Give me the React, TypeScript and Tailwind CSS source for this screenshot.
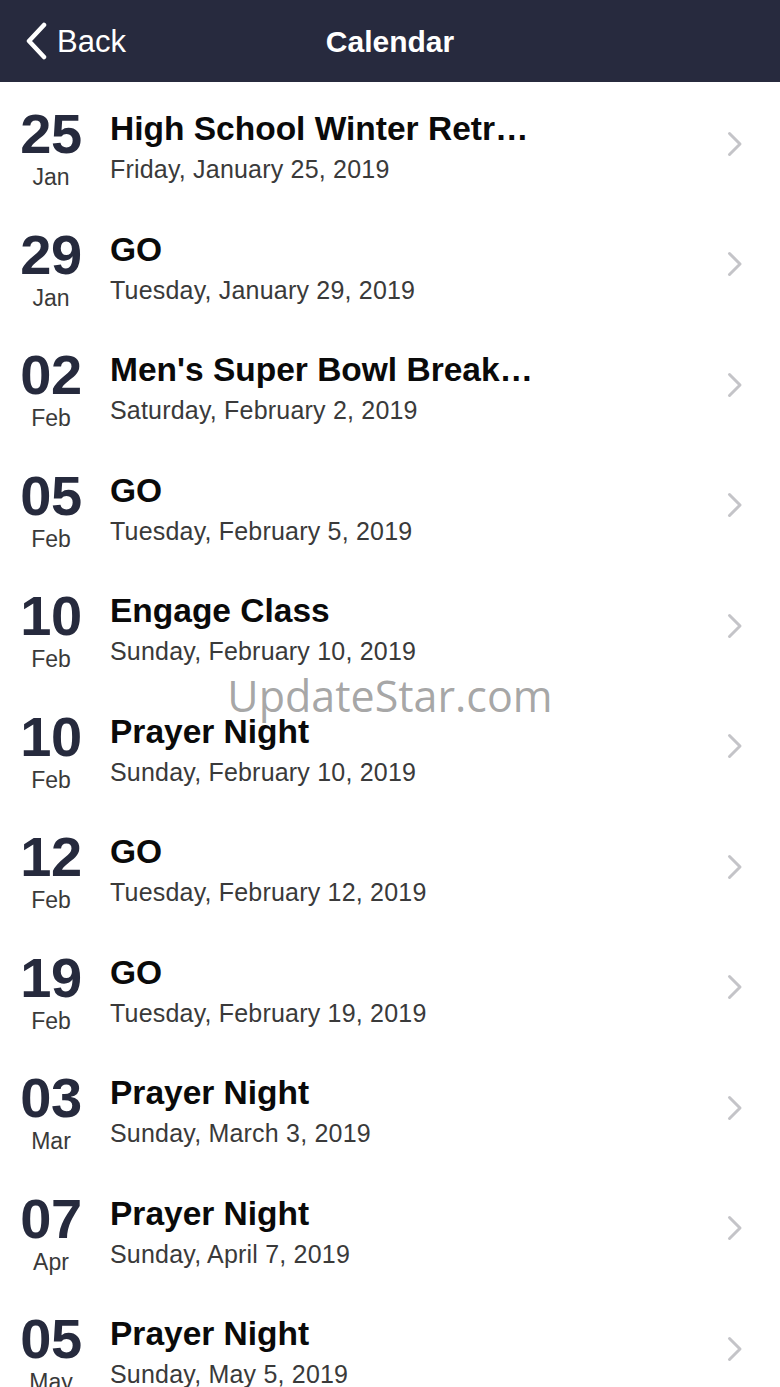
const events = [
  { day: '25', month: 'Jan', title: 'High School Winter Retreat 2019', date: 'Friday, January 25, 2019' },
  { day: '29', month: 'Jan', title: 'GO', date: 'Tuesday, January 29, 2019' },
  { day: '02', month: 'Feb', title: "Men's Super Bowl Breakfast", date: 'Saturday, February 2, 2019' },
  { day: '05', month: 'Feb', title: 'GO', date: 'Tuesday, February 5, 2019' },
  { day: '10', month: 'Feb', title: 'Engage Class', date: 'Sunday, February 10, 2019' },
  { day: '10', month: 'Feb', title: 'Prayer Night', date: 'Sunday, February 10, 2019' },
  { day: '12', month: 'Feb', title: 'GO', date: 'Tuesday, February 12, 2019' },
  { day: '19', month: 'Feb', title: 'GO', date: 'Tuesday, February 19, 2019' },
  { day: '03', month: 'Mar', title: 'Prayer Night', date: 'Sunday, March 3, 2019' },
  { day: '07', month: 'Apr', title: 'Prayer Night', date: 'Sunday, April 7, 2019' },
  { day: '05', month: 'May', title: 'Prayer Night', date: 'Sunday, May 5, 2019' },
];

const Chevron = () => (
  <svg width="16" height="26" viewBox="0 0 16 26" fill="none">
    <path d="M2.5 2.5 L13 13 L2.5 23.5" stroke="#c4c4c8" strokeWidth="3" strokeLinecap="round" strokeLinejoin="round" />
  </svg>
);

const App = () => {
  return (
    <div className="relative w-[780px] h-[1387px] overflow-hidden bg-white font-['Liberation_Sans',Arial,sans-serif]">
      <header className="h-[82px] bg-[#272a3e] flex items-center relative">
        <div className="flex items-center pl-[24px] text-white">
          <svg width="26" height="38" viewBox="0 0 26 38" fill="none">
            <path d="M20 3 L5 19 L20 35" stroke="white" strokeWidth="4.5" strokeLinecap="round" strokeLinejoin="round" />
          </svg>
          <span className="ml-[7px] text-[31px] leading-none pt-[1px]">Back</span>
        </div>
        <div className="absolute left-0 right-0 text-center text-white font-bold text-[30px] leading-none pt-[1px] pointer-events-none">
          Calendar
        </div>
      </header>

      <ul>
        {events.map((e, i) => (
          <li key={i} className="h-[120.5px] flex items-start">
            <div className="w-[102px] shrink-0 flex flex-col items-center pt-[24px]">
              <span className="text-[56px] leading-[56px] font-bold text-[#262a3d] tracking-[-0.5px]">{e.day}</span>
              <span className="text-[23px] leading-[23px] text-[#3a3a3a] mt-[4px]">{e.month}</span>
            </div>
            <div className="pl-[8px] pt-[27px] w-[442px] min-w-0">
              <div className="text-[33.5px] leading-[40px] font-bold text-[#0a0a0a] truncate">{e.title}</div>
              <div className="text-[25px] leading-[30px] text-[#3a3a3a] mt-[5px] whitespace-nowrap tracking-[0.2px]">{e.date}</div>
            </div>
            <div className="flex-1 h-full flex items-center justify-end pr-[37px] pt-[3px]">
              <Chevron />
            </div>
          </li>
        ))}
      </ul>

      <div className="absolute left-0 right-0 top-[670px] text-center text-[43px] leading-[52px] text-[#8f8f8f]/80 font-['Open_Sans',sans-serif] pointer-events-none">
        UpdateStar.com
      </div>
    </div>
  );
};

export default App;
